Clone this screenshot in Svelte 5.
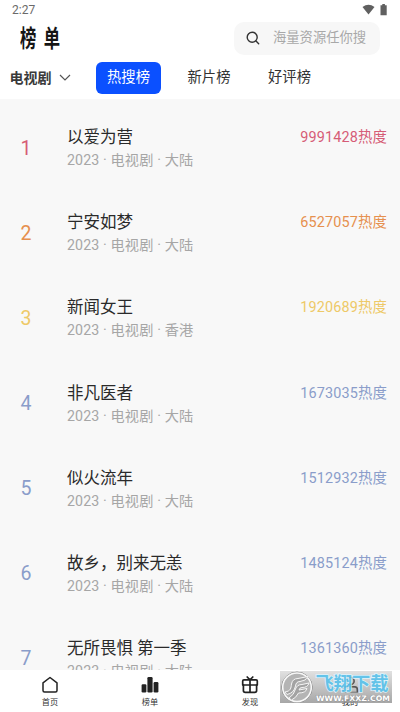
<script>
  const rows = [
    { title: '以爱为营', area: '大陆', heat: 9991428, color: '#d65c76' },
    { title: '宁安如梦', area: '大陆', heat: 6527057, color: '#e6904e' },
    { title: '新闻女王', area: '香港', heat: 1920689, color: '#eec967' },
    { title: '非凡医者', area: '大陆', heat: 1673035, color: '#8a9dca' },
    { title: '似火流年', area: '大陆', heat: 1512932, color: '#8a9dca' },
    { title: '故乡，别来无恙', area: '大陆', heat: 1485124, color: '#8a9dca' },
    { title: '无所畏惧 第一季', area: '大陆', heat: 1361360, color: '#8a9dca' }
  ];
</script>

<div class="screen">
  <header>
    <div class="status">
      <span>2:27</span>
      <svg width="27" height="14" viewBox="0 0 27 14" fill="#606060">
        <path d="M0.5 4Q6.5-0.7 12.5 4L6.5 11.5Z" />
        <path d="M18.5 2.2h1.8V1h2.6v1.2h1.8v10h-6.2z" />
      </svg>
    </div>
    <div class="top">
      <h1>榜单</h1>
      <div class="search">
        <svg width="14" height="14" viewBox="0 0 14 14" fill="none" stroke="#333" stroke-width="1.4" stroke-linecap="round">
          <circle cx="6.2" cy="6.2" r="5" />
          <path d="M10 10l2.7 2.7" />
        </svg>
        <span>海量资源任你搜</span>
      </div>
    </div>
    <div class="tabs">
      <div class="kind">
        <b>电视剧</b>
        <svg width="12" height="8" viewBox="0 0 12 8" fill="none" stroke="#555" stroke-width="1.2"><path d="M1 1l5 5 5-5" /></svg>
      </div>
      <span class="tab active">热搜榜</span>
      <span class="tab">新片榜</span>
      <span class="tab">好评榜</span>
    </div>
  </header>

  <main>
    {#each rows as row, i}
      <div class="row">
        <span class="rank" style="color: {row.color}">{i + 1}</span>
        <div class="info">
          <div class="title">{row.title}</div>
          <div class="sub">2023 · 电视剧 · {row.area}</div>
        </div>
        <span class="heat" style="color: {row.color}">{row.heat}热度</span>
      </div>
    {/each}
  </main>

  <nav>
    <div class="item">
      <svg width="18" height="18" viewBox="0 0 18 18" fill="none" stroke="#222" stroke-width="1.5" stroke-linejoin="round">
        <path d="M2 6.8L9 1.5l7 5.3v7.7q0 1.5-1.5 1.5h-11Q2 16 2 14.5z" />
      </svg>
      <span>首页</span>
    </div>
    <div class="item">
      <svg width="18" height="18" viewBox="0 0 18 18" fill="#222">
        <rect x="0.6" y="8.2" width="4.8" height="8.3" rx="1.2" />
        <rect x="6.4" y="1" width="5.2" height="15.5" rx="1.2" />
        <rect x="12.6" y="6" width="4.8" height="10.5" rx="1.2" />
      </svg>
      <span>榜单</span>
    </div>
    <div class="item">
      <svg width="18" height="18" viewBox="0 0 18 18" fill="none" stroke="#222" stroke-width="1.7" stroke-linejoin="round" stroke-linecap="round">
        <path d="M3 3.8h12q1.3 0 1.3 1.3v3.9H1.7V5.1Q1.7 3.8 3 3.8z" />
        <path d="M2.4 9v5.5q0 1.8 1.8 1.8h9.6q1.8 0 1.8-1.8V9M9 3.8v12.5M6.2 1L9 3.8 11.8 1" />
      </svg>
      <span>发现</span>
    </div>
    <div class="item">
      <svg width="18" height="18" viewBox="0 0 18 18" fill="none" stroke="#222" stroke-width="1.5">
        <circle cx="9" cy="5" r="3.7" />
        <path d="M2 16.2v-2.4q0-3 3-3h8q3 0 3 3v2.4z" />
      </svg>
      <span>我的</span>
    </div>
  </nav>

  <div class="mark">
    <svg width="34" height="32" viewBox="0 0 34 32">
      <circle cx="17" cy="16.3" r="15.2" fill="#b4b4b4" stroke="#808080" stroke-width="1" />
      <circle cx="17" cy="16.3" r="14.3" fill="none" stroke="#f8f8f8" stroke-width="1.6" />
      <path d="M5 21C11 20 11 17 11.500 13Q12.500 7.500 18 7.500L28 5.500Q26 10 20 10.500Q16 10.500 15.500 15Q14 22 7 23.500Z" fill="#a2a2a2" stroke="#f5f5f5" stroke-width="1" />
      <path d="M9 27Q14 24 15.500 18Q17 13.500 22 13.500L29 12Q28 16.500 22 16.500Q19.500 16.500 19 19L27 17.500Q26 22 18.500 22Q16 27 11.500 29Z" fill="#a2a2a2" stroke="#f5f5f5" stroke-width="1" />
    </svg>
    <svg width="78" height="32" viewBox="0 0 78 32">
      <g class="under">
        <circle cx="36.5" cy="10" r="3.7" />
        <path d="M29.5 21.2v-2.4q0-3 3-3h8q3 0 3 3v2.4" />
      </g>
      <text class="brand" x="1.5" y="19" textLength="73" lengthAdjust="spacingAndGlyphs">飞翔下载</text>
      <text class="url" x="2" y="29.7" textLength="74" lengthAdjust="spacingAndGlyphs">WWW.FXXZ.COM</text>
    </svg>
  </div>
</div>

<style>
  :global(body) {
    margin: 0;
  }
  .screen {
    position: relative;
    width: 400px;
    height: 712px;
    overflow: hidden;
    display: flex;
    flex-direction: column;
    background: #f8f8f8;
    color: #2a2a2a;
    font-family: Roboto, 'Noto Sans CJK SC', sans-serif;
  }
  header {
    height: 99px;
    flex: none;
    background: #fff;
  }
  .status {
    height: 20px;
    padding: 0 12px;
    display: flex;
    align-items: center;
    justify-content: space-between;
    font-size: 12px;
    color: #6a6a6a;
  }
  .status svg {
    margin-right: -1px;
  }
  .top {
    height: 36px;
    display: flex;
    align-items: center;
    justify-content: space-between;
    padding: 0 20px;
  }
  h1 {
    margin: 2px 0 0 0;
    font-size: 24px;
    line-height: 34px;
    font-weight: 700;
    letter-spacing: 11px;
    color: #151515;
    transform: scaleX(0.68);
    transform-origin: left center;
  }
  .search {
    box-sizing: border-box;
    width: 146px;
    height: 33px;
    border-radius: 10px;
    background: #f7f7f7;
    display: flex;
    align-items: center;
    padding-left: 12px;
    gap: 13px;
    font-size: 13.3px;
    line-height: 30px;
    color: #a8a8a8;
    white-space: nowrap;
  }
  .tabs {
    display: flex;
    align-items: center;
    height: 43px;
  }
  .kind {
    width: 86px;
    padding-left: 10px;
    display: flex;
    align-items: center;
    gap: 7px;
    font-size: 14px;
  }
  .kind b {
    margin: -1px 0 0 -0.5px;
    font-weight: 700;
    color: #3a3a3a;
  }
  .tab {
    width: 65px;
    height: 32px;
    margin-right: 15.5px;
    line-height: 30px;
    border-radius: 6px;
    text-align: center;
    font-size: 14.3px;
    color: #333;
  }
  .active {
    background: #0b50ff;
    color: #fff;
  }
  main {
    flex: 1;
    min-height: 0;
    overflow: hidden;
    padding-top: 5px;
  }
  .row {
    box-sizing: border-box;
    height: 85.15px;
    padding: 22.2px 13px 0 20px;
    display: flex;
  }
  .rank {
    width: 46.5px;
    padding-top: 11.4px;
    padding-left: 0.5px;
    box-sizing: border-box;
    font-size: 19.5px;
    line-height: 22px;
  }
  .info {
    flex: 1;
    padding-left: 0.5px;
  }
  .title {
    font-size: 16.5px;
    line-height: 24px;
    white-space: nowrap;
  }
  .sub {
    margin-top: -1px;
    font-size: 14.2px;
    line-height: 22px;
    letter-spacing: 0.13px;
    color: #a6a6a6;
  }
  .heat {
    font-size: 14.4px;
    line-height: 23px;
    letter-spacing: 0.15px;
  }
  nav {
    flex: none;
    height: 42px;
    display: flex;
    background: #fff;
  }
  .item {
    flex: 1;
    display: flex;
    flex-direction: column;
    align-items: center;
    padding-top: 6px;
    font-size: 8.2px;
    line-height: 16px;
    color: #333;
  }
  .mark {
    position: absolute;
    left: 280px;
    top: 671px;
    width: 112px;
    height: 32px;
    display: flex;
    background: linear-gradient(rgba(215, 215, 215, 0.75), rgba(145, 145, 145, 0.8));
  }
  .mark svg {
    display: block;
    flex: none;
  }
  .under {
    fill: none;
    stroke: #555;
    stroke-width: 1.4px;
  }
  .brand {
    font-size: 18.5px;
    font-weight: 700;
    fill: #58c2ec;
    stroke: #e0f6ff;
    stroke-width: 1.6px;
    paint-order: stroke;
    opacity: 0.9;
  }
  .url {
    font-family: 'DejaVu Sans', sans-serif;
    font-weight: 700;
    font-size: 7.6px;
    fill: #fff;
    stroke: #888;
    stroke-width: 0.7px;
    paint-order: stroke;
  }
</style>
